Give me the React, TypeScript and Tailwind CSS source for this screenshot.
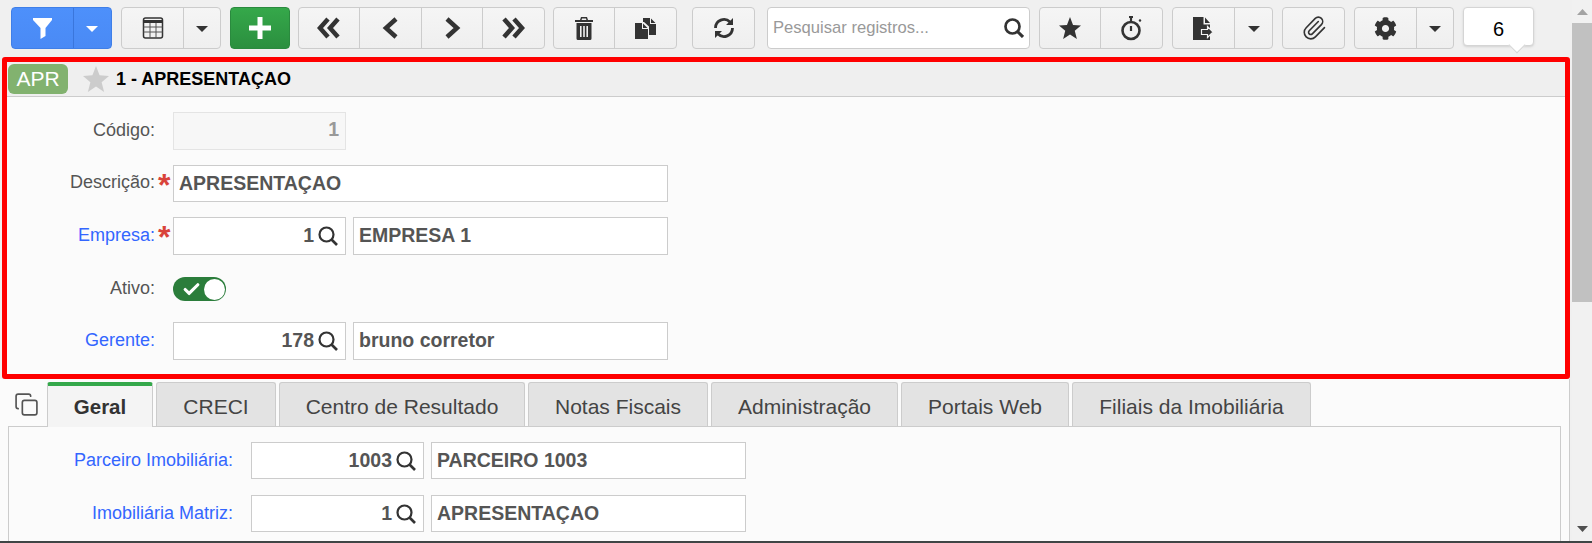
import React from 'react';
import { Check, Copy, Paperclip } from 'lucide-react';
import { FaCog } from 'react-icons/fa';

const Caret = ({ light }: { light?: boolean }) => (
  <svg width="12" height="6" viewBox="0 0 12 6" className="mt-[2px]">
    <path d="M0 0h12L6 6z" fill={light ? '#fff' : '#333'} />
  </svg>
);

const Funnel = () => (
  <svg width="19" height="21" viewBox="0 0 19 21">
    <path d="M0 0h19v2l-6.500 8v8L7.500 21V10L0 2z" fill="#fff" />
  </svg>
);

const TableIcon = () => (
  <svg width="22" height="22" viewBox="0 0 21 22" fill="none">
    <rect x="1" y="1" width="19" height="20" rx="2" stroke="#333" strokeWidth="1.5" />
    <path d="M1 4.500h19" stroke="#333" strokeWidth="3" />
    <path d="M1 10h19M1 15h19M7.500 6v15M13.500 6v15" stroke="#555" strokeWidth="1" />
  </svg>
);

const Plus = () => (
  <svg width="22" height="22" viewBox="0 0 22 22">
    <path d="M8.500 0h5v8.500H22v5h-8.500V22h-5v-8.500H0v-5h8.500z" fill="#fff" />
  </svg>
);

const Chevrons = ({ d, w }: { d: string; w: number }) => (
  <svg width={w} height="22" viewBox={`0 0 ${w} 22`} fill="none">
    <path d={d} stroke="#333" strokeWidth="4.500" />
  </svg>
);

const Trash = () => (
  <svg width="18" height="23" viewBox="0 0 18 23">
    <path d="M6 0h6l1 3h5v2H0V3h5zM7 1.500L6.600 3h4.800L11 1.500z" fill="#333" fillRule="evenodd" />
    <path d="M1.500 6h15v15.500a1.500 1.500 0 0 1-1.500 1.500H3a1.500 1.500 0 0 1-1.500-1.500zM5 9v11h1.600V9zM8.200 9v11h1.600V9zM11.400 9v11H13V9z" fill="#333" fillRule="evenodd" />
  </svg>
);

const Files = () => (
  <svg width="21" height="21" viewBox="0 0 21 21">
    <path d="M8 0h7v6h6v11h-7V8.500L9 4H8zM16 0.500l4.500 4.500H16z" fill="#333" />
    <path d="M0 5h7v6h6v10H0zM8 5.500l4.500 4.500H8z" fill="#333" />
  </svg>
);

const Refresh = () => (
  <svg width="22" height="22" viewBox="0 0 22 22" fill="none">
    <path d="M2.500 11a8.500 8.500 0 0 1 14.500-6" stroke="#333" strokeWidth="2.800" />
    <path d="M19.500 11a8.500 8.500 0 0 1-14.500 6" stroke="#333" strokeWidth="2.800" />
    <path d="M20 1v7h-7zM2 21v-7h7z" fill="#333" />
  </svg>
);

const SearchIcon = ({ weight = 2.700 }: { weight?: number }) => (
  <svg width="20" height="20" viewBox="0 0 20 20" fill="none">
    <circle cx="8.500" cy="8.500" r="7" stroke="#333" strokeWidth={weight} />
    <path d="M13.500 13.500L19 19" stroke="#333" strokeWidth={weight + 0.4} />
  </svg>
);

const Star = ({ size, color }: { size: number; color: string }) => (
  <svg width={size} height={size} viewBox="0 0 24 24">
    <path d="M12 0l3.300 8.600 8.700.6-6.800 5.700 2.300 9.100L12 19l-7.500 5 2.300-9.100L0 9.200l8.700-.6z" fill={color} />
  </svg>
);

const Stopwatch = () => (
  <svg width="21" height="25" viewBox="0 0 21 25" fill="none">
    <circle cx="10" cy="14.500" r="8.500" stroke="#333" strokeWidth="2.600" />
    <path d="M8 1h4M10 1v4M10 10v5" stroke="#333" strokeWidth="2.200" />
    <circle cx="19" cy="4.500" r="1.200" fill="#333" />
  </svg>
);

const FileExport = () => (
  <svg width="21" height="23" viewBox="0 0 21 23">
    <path d="M0 0h10.500v7.500H17V23H0zM12 0.500l5 5.500h-5z" fill="#333" />
    <path d="M8.500 12.500h6V9.500l5.500 5.500-5.500 5.500v-3h-6z" fill="#333" stroke="#f2f2f2" strokeWidth="1.200" />
  </svg>
);

const Segment = ({ w, children, last }: { w: number; children: React.ReactNode; last?: boolean }) => (
  <div
    className={`flex h-full items-center justify-center ${last ? '' : 'border-r border-[#cccccc]'}`}
    style={{ width: w }}
  >
    {children}
  </div>
);

const Group = ({ className, children }: { className: string; children: React.ReactNode }) => (
  <div className={`flex h-[42px] shrink-0 rounded-[4px] border border-[#cccccc] bg-gradient-to-b from-[#f5f5f5] to-[#efefef] ${className}`}>
    {children}
  </div>
);

const Toolbar = () => (
  <div className="flex h-[57px] shrink-0 items-start pl-[11px] pt-[7px]">
    <div className="flex h-[42px] w-[101px] shrink-0 rounded-[4px] border border-[#3f7fe8] bg-gradient-to-b from-[#4d90fb] to-[#4a8af5]">
      <div className="flex w-[62px] items-center justify-center border-r border-[#3a76dc]"><Funnel /></div>
      <div className="flex flex-1 items-center justify-center pr-[2px]"><Caret light /></div>
    </div>
    <Group className="ml-[9px] w-[100px]">
      <Segment w={62}><TableIcon /></Segment>
      <Segment w={36} last><Caret /></Segment>
    </Group>
    <div className="ml-[9px] flex h-[42px] w-[60px] shrink-0 items-center justify-center rounded-[4px] border border-[#2a8a3e] bg-gradient-to-b from-[#35a84a] to-[#2b8f3f]">
      <Plus />
    </div>
    <Group className="ml-[8px] w-[247px]">
      <Segment w={61}><Chevrons w={24} d="M11 2L3 11l8 9M21 2l-8 9 8 9" /></Segment>
      <Segment w={62}><Chevrons w={18} d="M14 2L4 11l10 9" /></Segment>
      <Segment w={61}><Chevrons w={18} d="M4 2l10 9-10 9" /></Segment>
      <Segment w={61} last><div className="pr-[2px]"><Chevrons w={24} d="M3 2l8 9-8 9M13 2l8 9-8 9" /></div></Segment>
    </Group>
    <Group className="ml-[8px] w-[124px]">
      <Segment w={61}><Trash /></Segment>
      <Segment w={61} last><Files /></Segment>
    </Group>
    <Group className="ml-[15px] w-[63px]">
      <Segment w={61} last><Refresh /></Segment>
    </Group>
    <div className="ml-[12px] flex h-[42px] w-[263px] shrink-0 items-center justify-between rounded-[4px] border border-[#cccccc] bg-white pl-[5px] pr-[5px]">
      <span className="pt-[1px] text-[16.6px] text-[#999999]">Pesquisar registros...</span>
      <SearchIcon />
    </div>
    <Group className="ml-[9px] w-[124px]">
      <Segment w={61}><Star size={22} color="#333" /></Segment>
      <Segment w={61} last><Stopwatch /></Segment>
    </Group>
    <Group className="ml-[9px] w-[101px]">
      <Segment w={62}><FileExport /></Segment>
      <Segment w={37} last><Caret /></Segment>
    </Group>
    <Group className="ml-[9px] w-[63px]">
      <Segment w={61} last><Paperclip size={26} strokeWidth={1.5} color="#333" /></Segment>
    </Group>
    <Group className="ml-[9px] w-[100px]">
      <Segment w={62}><FaCog size={23} color="#333" /></Segment>
      <Segment w={36} last><Caret /></Segment>
    </Group>
    <div className="relative ml-[9px] flex h-[39px] w-[71px] shrink-0 items-center justify-center rounded-[4px] border border-[#d5d5d5] bg-white pt-[5px] text-[20px] text-black shadow-sm">
      6
      <div className="absolute left-[47px] top-[31px] h-[12px] w-[12px] rotate-45 border-b border-r border-[#d5d5d5] bg-white" />
    </div>
  </div>
);

const Box = ({
  w,
  className = '',
  children,
}: {
  w: number;
  className?: string;
  children?: React.ReactNode;
}) => (
  <div
    className={`flex h-full shrink-0 items-center border border-[#cccccc] bg-white text-[19.5px] font-bold text-[#555555] ${className}`}
    style={{ width: w }}
  >
    {children}
  </div>
);

const Lookup = ({ value, name, w, nameW }: { value: string; name: string; w: number; nameW: number }) => (
  <div className="flex h-full gap-[7px]">
    <Box w={w} className="justify-end pr-[7px]">
      <span className="mr-[4px]">{value}</span>
      <SearchIcon weight={2.200} />
    </Box>
    <Box w={nameW} className="pl-[5px]">{name}</Box>
  </div>
);

const Label = ({ text, link, w, up }: { text: string; link?: boolean; w: number; up?: boolean }) => (
  <div
    className={`shrink-0 text-right text-[18px] ${up ? 'mb-[2px]' : ''} ${link ? 'text-[#3366ff]' : 'text-[#555555]'}`}
    style={{ width: w }}
  >
    {text}
  </div>
);

const Req = ({ on }: { on?: boolean }) => (
  <div className="h-full w-[18px] shrink-0 pl-[3px] text-[32px] font-bold leading-[40px] text-[#d9433a]">
    {on ? '*' : ''}
  </div>
);

const RecordPanel = () => (
  <div className="ml-[2px] h-[322px] w-[1568px] shrink-0 rounded-[3px] border-[5px] border-[#ff0000] bg-[#fbfbfb]">
    <div className="flex h-[35px] items-center border-b border-[#cccccc] bg-[#efefef]">
      <div className="ml-[1px] flex h-[30px] w-[60px] items-center justify-center rounded-[6px] bg-[#82b26f] text-[21px] text-white">
        APR
      </div>
      <div className="ml-[15px]"><Star size={26} color="#cccccc" /></div>
      <span className="ml-[7px] text-[18px] font-bold text-black">1 - APRESENTAÇAO</span>
    </div>
    <div className="flex flex-col pt-[15px]">
      <div className="flex h-[38px] items-center">
        <Label text="Código:" w={148} up />
        <Req />
        <div className="flex h-full w-[173px] items-center justify-end border border-[#e4e4e4] bg-[#f7f7f7] pb-[2px] pr-[6px] text-[19.5px] font-bold text-[#999999]">
          1
        </div>
      </div>
      <div className="mt-[15px] flex h-[37px] items-center">
        <Label text="Descrição:" w={148} up />
        <Req on />
        <Box w={495} className="pl-[5px]">APRESENTAÇAO</Box>
      </div>
      <div className="mt-[15px] flex h-[38px] items-center">
        <Label text="Empresa:" link w={148} up />
        <Req on />
        <Lookup value="1" name="EMPRESA 1" w={173} nameW={315} />
      </div>
      <div className="mt-[22px] flex h-[24px] items-center">
        <Label text="Ativo:" w={148} up />
        <Req />
        <div className="flex h-[24px] w-[53px] items-center justify-between rounded-full bg-[#2b7d3b] pl-[9px] pr-[1px]">
          <Check size={19} strokeWidth={4} color="#fff" />
          <div className="h-[21px] w-[21px] rounded-full bg-white" />
        </div>
      </div>
      <div className="mt-[21px] flex h-[38px] items-center">
        <Label text="Gerente:" link w={148} up />
        <Req />
        <Lookup value="178" name="bruno corretor" w={173} nameW={315} />
      </div>
    </div>
  </div>
);

const tabs = [
  { label: 'CRECI', w: 120 },
  { label: 'Centro de Resultado', w: 246 },
  { label: 'Notas Fiscais', w: 180 },
  { label: 'Administração', w: 187 },
  { label: 'Portais Web', w: 168 },
  { label: 'Filiais da Imobiliária', w: 239 },
];

const TabsArea = () => (
  <div className="mr-[2px] flex min-h-0 flex-1 flex-col border-r border-[#cccccc] bg-[#fbfbfb] pt-[3px]">
    <div className="flex h-[44px] shrink-0 items-start">
      <div className="flex h-full w-[47px] shrink-0 justify-center pl-[6px] pt-[10px]">
        <Copy size={25} strokeWidth={1.6} color="#555" />
      </div>
      <div className="z-10 flex h-[45px] w-[106px] shrink-0 items-center justify-center rounded-t-[3px] border-x border-[#cccccc] border-t-[4px] border-t-[#34a84a] bg-[#f4f4f4] pt-[2px] text-[20.5px] font-bold text-[#333333]">
        Geral
      </div>
      <div className="ml-[3px] flex gap-[3px]">
        {tabs.map((t) => (
          <div
            key={t.label}
            className="flex h-[44px] shrink-0 items-center justify-center rounded-t-[3px] border border-b-0 border-[#cccccc] bg-[#e3e3e3] pt-[4px] text-[21px] text-[#444444]"
            style={{ width: t.w }}
          >
            {t.label}
          </div>
        ))}
      </div>
    </div>
    <div className="mx-[8px] flex min-h-0 flex-1 flex-col border-x border-t border-[#cccccc] pt-[15px]">
      <div className="flex h-[37px] shrink-0 items-center">
        <Label text="Parceiro Imobiliária:" link w={224} />
        <div className="w-[18px] shrink-0" />
        <Lookup value="1003" name="PARCEIRO 1003" w={173} nameW={315} />
      </div>
      <div className="mt-[16px] flex h-[37px] shrink-0 items-center">
        <Label text="Imobiliária Matriz:" link w={224} />
        <div className="w-[18px] shrink-0" />
        <Lookup value="1" name="APRESENTAÇAO" w={173} nameW={315} />
      </div>
    </div>
  </div>
);

const Scrollbar = () => (
  <div className="flex w-[20px] shrink-0 flex-col bg-[#f1f1f1]">
    <div className="flex h-[23px] shrink-0 items-center justify-center">
      <svg width="11" height="6" viewBox="0 0 11 6"><path d="M5.500 0L11 6H0z" fill="#a3a3a3" /></svg>
    </div>
    <div className="h-[279px] shrink-0 bg-[#c1c1c1]" />
    <div className="flex-1" />
    <div className="flex h-[24px] shrink-0 items-center justify-center">
      <svg width="11" height="6" viewBox="0 0 11 6"><path d="M0 0h11L5.500 6z" fill="#505050" /></svg>
    </div>
  </div>
);

export default function App() {
  return (
    <div className="flex h-[543px] w-[1592px] flex-col overflow-hidden bg-[#f0f0f0] font-['Liberation_Sans',Arial,sans-serif]">
      <div className="flex min-h-0 flex-1">
        <div className="flex w-[1572px] shrink-0 flex-col">
          <Toolbar />
          <RecordPanel />
          <TabsArea />
        </div>
        <Scrollbar />
      </div>
      <div className="h-[2px] shrink-0 bg-[#3f4545]" />
    </div>
  );
}
